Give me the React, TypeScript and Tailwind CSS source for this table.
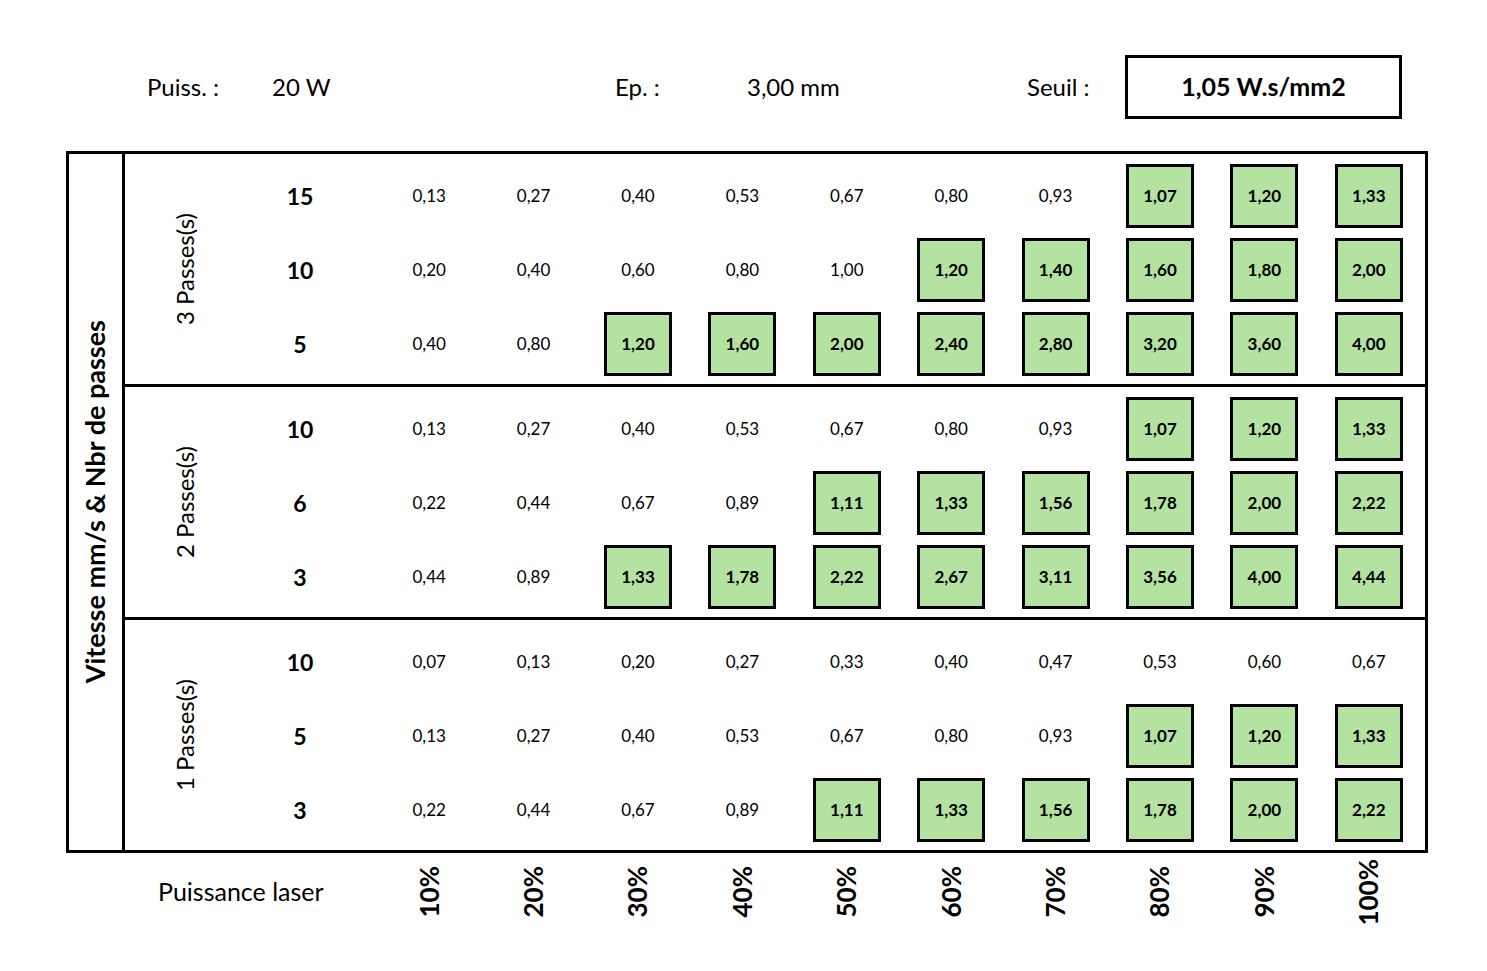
const sections = [
  {
    label: "3 Passes(s)",
    rows: [
      { speed: "15", values: ["0,13", "0,27", "0,40", "0,53", "0,67", "0,80", "0,93", "1,07", "1,20", "1,33"] },
      { speed: "10", values: ["0,20", "0,40", "0,60", "0,80", "1,00", "1,20", "1,40", "1,60", "1,80", "2,00"] },
      { speed: "5", values: ["0,40", "0,80", "1,20", "1,60", "2,00", "2,40", "2,80", "3,20", "3,60", "4,00"] },
    ],
  },
  {
    label: "2 Passes(s)",
    rows: [
      { speed: "10", values: ["0,13", "0,27", "0,40", "0,53", "0,67", "0,80", "0,93", "1,07", "1,20", "1,33"] },
      { speed: "6", values: ["0,22", "0,44", "0,67", "0,89", "1,11", "1,33", "1,56", "1,78", "2,00", "2,22"] },
      { speed: "3", values: ["0,44", "0,89", "1,33", "1,78", "2,22", "2,67", "3,11", "3,56", "4,00", "4,44"] },
    ],
  },
  {
    label: "1 Passes(s)",
    rows: [
      { speed: "10", values: ["0,07", "0,13", "0,20", "0,27", "0,33", "0,40", "0,47", "0,53", "0,60", "0,67"] },
      { speed: "5", values: ["0,13", "0,27", "0,40", "0,53", "0,67", "0,80", "0,93", "1,07", "1,20", "1,33"] },
      { speed: "3", values: ["0,22", "0,44", "0,67", "0,89", "1,11", "1,33", "1,56", "1,78", "2,00", "2,22"] },
    ],
  },
];

const powers = ["10%", "20%", "30%", "40%", "50%", "60%", "70%", "80%", "90%", "100%"];

// seuil = 1,05 W.s/mm2
const over = (v: string) => parseFloat(v.replace(",", ".")) >= 1.05;

function Cell({ value }: { value: string }) {
  if (over(value)) {
    return (
      <div className="flex items-center justify-center">
        <div className="w-[68px] h-[64px] border-[3px] border-black bg-[#b4e2a0] flex items-center justify-center font-bold text-[17px]">
          {value}
        </div>
      </div>
    );
  }
  return <div className="flex items-center justify-center text-[17px]">{value}</div>;
}

export default function App() {
  return (
    <div className="min-h-screen w-[1487px] pt-[55px] bg-white text-black font-['Lato','Liberation_Sans',sans-serif]">
      {/* Header */}
      <div className="flex items-center h-[64px] pl-[147px] text-[24px]">
        <span className="w-[125px]">Puiss. :</span>
        <span className="w-[343px]">20 W</span>
        <span className="w-[132px]">Ep. :</span>
        <span className="w-[280px]">3,00 mm</span>
        <span className="w-[98px]">Seuil :</span>
        <div className="w-[277px] h-[64px] border-[3px] border-black flex items-center justify-center font-bold text-[25px]">
          1,05 W.s/mm2
        </div>
      </div>

      {/* Table */}
      <div className="ml-[66px] mt-[32px] w-[1362px] border-[3px] border-black flex">
        <div className="w-[56px] border-r-[3px] border-black flex items-center justify-center">
          <span className="[writing-mode:vertical-rl] rotate-180 font-bold text-[27px] whitespace-nowrap">
            Vitesse mm/s &amp; Nbr de passes
          </span>
        </div>
        <div className="flex-1 flex flex-col">
          {sections.map((s, i) => (
            <div
              key={s.label}
              className={`flex ${i > 0 ? "h-[233px] border-t-[3px] border-black" : "h-[230px]"}`}
            >
              <div className="w-[120px] flex items-center justify-center">
                <span className="[writing-mode:vertical-rl] rotate-180 text-[24px] whitespace-nowrap">{s.label}</span>
              </div>
              <div className="flex flex-col pt-[5px]">
                {s.rows.map((r, j) => (
                  <div key={j} className="flex h-[74px]">
                    <div className="w-[110px] flex items-center justify-center font-bold text-[23px]">{r.speed}</div>
                    <div className="w-[22px]" />
                    <div className="w-[1044px] grid grid-cols-10">
                      {r.values.map((v, k) => (
                        <Cell key={k} value={v} />
                      ))}
                    </div>
                  </div>
                ))}
              </div>
            </div>
          ))}
        </div>
      </div>

      {/* Footer */}
      <div className="flex items-center h-[78px] ml-[66px]">
        <div className="w-[311px] pl-[92px] text-[25px]">Puissance laser</div>
        <div className="w-[1044px] grid grid-cols-10">
          {powers.map((p) => (
            <div key={p} className="flex items-center justify-center">
              <span className="[writing-mode:vertical-rl] rotate-180 font-bold text-[26px] whitespace-nowrap">{p}</span>
            </div>
          ))}
        </div>
      </div>
    </div>
  );
}
